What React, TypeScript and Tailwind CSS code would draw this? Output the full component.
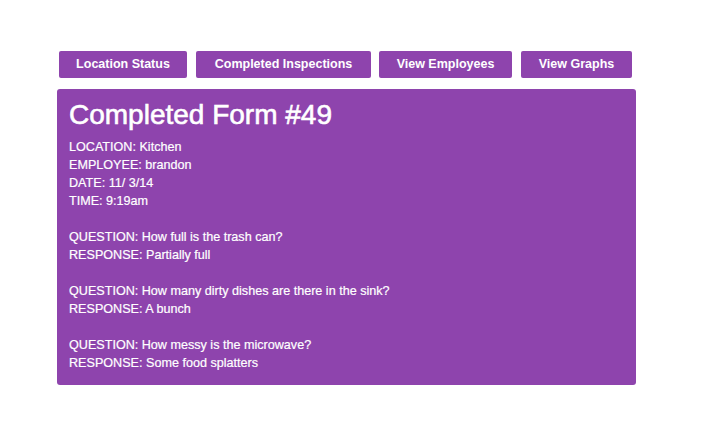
import React from 'react';

const tabs = [
  { label: 'Location Status', cls: 'w-[128px]' },
  { label: 'Completed Inspections', cls: 'ml-[9px] w-[175px]' },
  { label: 'View Employees', cls: 'ml-[8px] w-[133px]' },
  { label: 'View Graphs', cls: 'ml-[9px] w-[111px]' },
];

const lines = [
  'LOCATION: Kitchen',
  'EMPLOYEE: brandon',
  'DATE: 11/ 3/14',
  'TIME: 9:19am',
  '',
  'QUESTION: How full is the trash can?',
  'RESPONSE: Partially full',
  '',
  'QUESTION: How many dirty dishes are there in the sink?',
  'RESPONSE: A bunch',
  '',
  'QUESTION: How messy is the microwave?',
  'RESPONSE: Some food splatters',
];

const App: React.FC = () => {
  return (
    <div className="min-h-screen bg-white pl-[57px] pt-[51px] font-['Liberation_Sans',Arial,sans-serif] text-white">
      <div className="ml-[2px] flex">
        {tabs.map((t) => (
          <button
            key={t.label}
            className={`h-[27px] rounded-[2px] bg-[#8e44ad] text-[12.5px] font-bold text-white ${t.cls}`}
          >
            {t.label}
          </button>
        ))}
      </div>

      <div className="mt-[11px] w-[579px] rounded-[3px] bg-[#8e44ad] px-[12px] pt-[10px] pb-[13px]">
        <h1 className="mb-[7px] text-[28px] leading-[32px] [-webkit-text-stroke:0.6px_white]">Completed Form #49</h1>
        <div className="text-[12.6px] leading-[18px] [-webkit-text-stroke:0.2px_white]">
          {lines.map((l, i) => (
            <div key={i} className="h-[18px]">
              {l}
            </div>
          ))}
        </div>
      </div>
    </div>
  );
};

export default App;
